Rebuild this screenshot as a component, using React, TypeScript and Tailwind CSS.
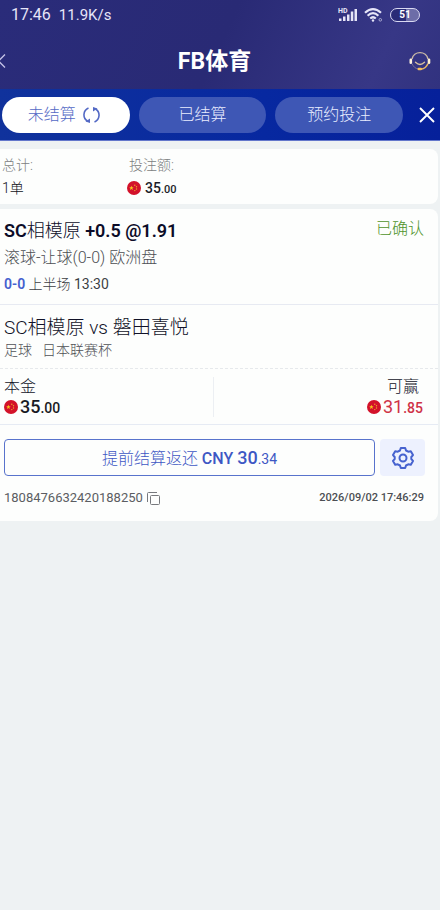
import React from "react";

function Coin() {
  return (
    <svg viewBox="0 0 14 14" className="size-3.5 shrink-0" aria-hidden="true">
      <circle cx="7" cy="7" r="7" fill="#d3122a" />
      <path d="M4.4 4.700l.7 1.500 1.600.1-1.300 1 .5 1.600-1.500-.9-1.400.9.400-1.600-1.200-1 1.600-.1z" fill="#f6c21c" />
      <g fill="#f0a62a">
        <circle cx="7.8" cy="4.2" r=".7" />
        <circle cx="9.5" cy="5.8" r=".7" />
        <circle cx="9.5" cy="8" r=".7" />
        <circle cx="7.8" cy="9.6" r=".7" />
      </g>
    </svg>
  );
}

function StatusBar() {
  return (
    <div className="flex h-[30px] items-center justify-between pr-5 pl-[11px] font-normal text-[#e6e5f8]">
      <div className="flex items-center gap-2">
        <span className="text-base">17:46</span>
        <span className="text-[15px]">11.9K/s</span>
      </div>
      <div className="flex items-center">
        <svg width="20" height="16" viewBox="0 0 20 16" fill="currentColor" aria-hidden="true">
          <text x="0" y="6" fontSize="7" fontWeight="700">HD</text>
          <path d="M1 11.500h2.500V14H1zM5 9.500h2.500V14H5zM9 7.500h2.500V14H9zM12.800 4.500h2.500V14h-2.500zM16.500 2H19v12h-2.500z" />
        </svg>
        <svg width="20" height="16" viewBox="0 0 20 16" className="ml-1.5" fill="none" stroke="currentColor" strokeWidth="2.200" aria-hidden="true">
          <path d="M1 5.800Q9 -1.500 17 5.800M3.600 8.700Q9 3.700 14.400 8.700M6.200 11.500Q9 9 11.800 11.500" />
          <circle cx="9" cy="13.500" r="1.200" fill="currentColor" stroke="none" />
          <circle cx="16.300" cy="12.800" r="1.300" strokeWidth="1" opacity=".6" />
        </svg>
        <div className="ml-1.5 flex h-3.5 w-[30px] items-center justify-center rounded-full border border-[#d9d9f2] bg-[linear-gradient(90deg,#292b77_55%,#6d6da8_55%)] text-[10px] leading-none font-bold text-white">
          51
        </div>
      </div>
    </div>
  );
}

function TitleBar() {
  return (
    <header className="flex h-[59px] items-center justify-between pt-0.5 pr-[9px]">
      <button aria-label="返回" className="w-2 text-[#c3c2e6]">
        <svg width="6" height="16" viewBox="0 0 6 16" fill="none" stroke="currentColor" strokeWidth="1.300">
          <path d="M5 1.500L-1.500 8L5 14.500" />
        </svg>
      </button>
      <h1 className="pt-0.5 pl-3 text-[23px] leading-7 font-bold text-white">FB体育</h1>
      <button aria-label="客服">
        <svg width="22" height="22" viewBox="0 0 22 22" fill="none">
          <path d="M3 9A8.200 8.200 0 0 1 19 9" stroke="#c9b9a5" strokeWidth="1.400" />
          <path d="M3 13.500Q5 18.500 9.500 19" stroke="#777098" strokeWidth="1" />
          <path d="M19 13.500Q17 18.500 12 19.300" stroke="#e9b765" strokeWidth="1.500" />
          <path d="M6.500 12.300Q11 16.500 15.500 12.300" stroke="#d8c1a0" strokeWidth="1.400" strokeLinecap="round" />
          <rect x=".5" y="8.500" width="2.600" height="5.500" rx="1.300" fill="#fff4df" />
          <rect x="18.700" y="8.500" width="2.600" height="5.500" rx="1.300" fill="#fff0cf" />
          <rect x="8.500" y="17.700" width="4.500" height="2.600" rx="1.200" fill="#f5bd5b" />
        </svg>
      </button>
    </header>
  );
}

function Tabs() {
  const idle = "h-9 flex-1 rounded-full bg-[#3e57b5] text-[#e9edff]";
  return (
    <nav className="flex h-[52px] items-center gap-[9px] border-b border-[#6377cb] bg-[linear-gradient(90deg,#10329c,#0728a0_60%,#06209a)] pr-[5px] pl-0.5 text-base">
      <button className="flex h-9 flex-1 items-center justify-center rounded-full bg-white text-[#5369c5]">
        <span className="flex items-center gap-[7px] pr-1">
          未结算
          <svg width="17" height="18" viewBox="0 0 17 18" fill="none" stroke="currentColor" strokeWidth="1.600" aria-hidden="true">
            <path d="M5.500 2A7.300 7.300 0 0 0 4.500 15M11.500 16A7.300 7.300 0 0 0 12.500 3" />
            <path d="M2.500 15.500L7 17V12.500zM14.500 2.500L10 1V5.500z" fill="currentColor" stroke="none" />
          </svg>
        </span>
      </button>
      <button className={idle}>已结算</button>
      <button className={idle}>预约投注</button>
      <button aria-label="关闭" className="ml-[7px] text-white">
        <svg width="16" height="16" viewBox="0 0 16 16" fill="none" stroke="currentColor" strokeWidth="1.900">
          <path d="M1 1l14 14M15 1L1 15" />
        </svg>
      </button>
    </nav>
  );
}

function Summary() {
  return (
    <section className="mt-2 mr-0.5 flex h-[55px] rounded-r-lg bg-[#fdfefd] pt-1 pl-0.5 text-sm">
      <div className="w-[125px]">
        <div className="leading-6 text-[#7c7f81]">总计:</div>
        <div className="leading-[22px] text-[#101118]">1单</div>
      </div>
      <div>
        <div className="pl-0.5 leading-6 text-[#7c7f81]">投注额:</div>
        <div className="flex items-center gap-1 leading-[22px] font-medium text-[#1c1d28]">
          <Coin />
          <span>35<span className="text-[11px] leading-none">.00</span></span>
        </div>
      </div>
    </section>
  );
}

function BetCard() {
  return (
    <article className="mt-[5px] mr-0.5 rounded-r-lg bg-[#fdfefd] text-[#111228]">
      <div className="flex items-start justify-between border-b border-[#e7eaf2] pt-[9px] pr-3.5 pb-2 pl-1">
        <div>
          <h2 className="text-lg leading-[26px] text-[#0c0c28]">
            <b className="font-semibold">SC</b>相模原 <b className="font-semibold">+0.5 @1.91</b>
          </h2>
          <p className="text-base leading-7 text-[#4c4e53]">滚球-让球(0-0) 欧洲盘</p>
          <p className="text-sm leading-6 text-[#3c3e44]">
            <b className="font-semibold text-[#4560cf]">0-0</b> 上半场 <span className="font-normal">13:30</span>
          </p>
        </div>
        <span className="text-base leading-[22px] text-[#4f932a]">已确认</span>
      </div>
      <div className="border-b border-dashed border-[#e6e9ec] pt-[11px] pb-2 pl-1">
        <h3 className="text-[19px] leading-6">SC相模原 vs 磐田喜悦</h3>
        <p className="flex gap-2.5 text-sm leading-5 text-[#4f5156]">
          <span>足球</span>
          <span>日本联赛杯</span>
        </p>
      </div>
      <div className="flex border-b border-[#e6ebf4] pt-2 pr-[15px] pb-[7px] pl-1 text-base leading-5">
        <div className="flex-1 border-r border-[#eceff3]">
          <div>本金</div>
          <div className="flex h-5 items-center gap-0.5 text-lg leading-5 font-medium text-[#191a24]">
            <Coin />
            <span>35<span className="text-sm leading-none">.00</span></span>
          </div>
        </div>
        <div className="flex flex-1 flex-col items-end">
          <div className="pr-1">可赢</div>
          <div className="flex h-5 items-center gap-0.5 text-lg leading-5 font-normal text-[#cf3347]">
            <Coin />
            <span>31<span className="text-sm leading-none font-medium">.85</span></span>
          </div>
        </div>
      </div>
      <div className="flex gap-[5px] pt-3.5 pr-[13px] pl-1">
        <button className="h-[37px] flex-1 rounded border border-[#5873cc] text-base text-[#3d57c4]">
          提前结算返还 <span className="font-medium">CNY <span className="text-lg">30</span></span><span className="text-sm font-normal">.34</span>
        </button>
        <button aria-label="设置" className="flex h-[37px] w-[45px] items-center justify-center rounded-sm bg-[#edf1fe] text-[#4662cf]">
          <svg width="24" height="24" viewBox="0 0 24 24" fill="none" stroke="currentColor" strokeWidth="2" strokeLinejoin="round">
            <path d="M9.800 2h4.400l.8 2.500 2.200 1.200 2.600-.5 2.200 3.900-1.700 1.900v2l1.700 1.900-2.200 3.900-2.600-.5L15 19.500l-.8 2.500H9.800L9 19.500l-2.200-1.200-2.600.5L2 14.900 3.700 13v-2L2 9.100l2.200-3.900 2.600.5L9 4.500z" />
            <circle cx="12" cy="12" r="3.500" />
          </svg>
        </button>
      </div>
      <footer className="flex items-center justify-between pt-2.5 pr-3.5 pb-[11px] pl-1 leading-6 font-normal text-[#5b5d62]">
        <div className="flex items-center gap-1 text-[13px]">
          1808476632420188250
          <button aria-label="复制单号" className="text-[#77797d]">
            <svg width="13" height="13" viewBox="0 0 13 13" fill="none" stroke="currentColor">
              <rect x="3.500" y="3.500" width="9" height="9" rx="1" />
              <path d="M.5 10V1.500Q.5 .5 1.500 .5H10" />
            </svg>
          </button>
        </div>
        <time className="text-[11px] font-medium text-[#4c4e53]">2026/09/02 17:46:29</time>
      </footer>
    </article>
  );
}

export default function App() {
  return (
    <div className="min-h-screen bg-[#eef2f3] font-[Roboto,'Noto_Sans_CJK_SC',sans-serif] font-light">
      <div className="bg-[linear-gradient(115deg,#2a2c7a,#292a75_50%,#373786_85%,#31327f)]">
        <StatusBar />
        <TitleBar />
      </div>
      <Tabs />
      <main>
        <Summary />
        <BetCard />
      </main>
    </div>
  );
}
